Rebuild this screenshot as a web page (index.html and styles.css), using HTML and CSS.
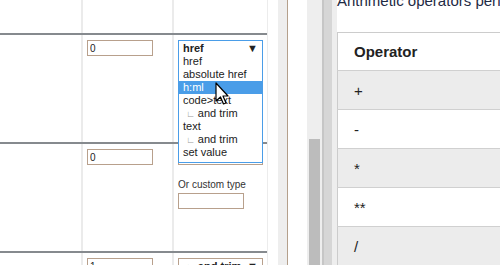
FILE: index.html
```html
<!DOCTYPE html>
<html lang="en">
<head>
    <meta charset="UTF-8">
    <title>Scraper fields</title>
    <link rel="stylesheet" href="styles.css">
</head>
<body>
    <div class="layout">
        <div class="fields">
            <div class="row row-top">
                <div class="cell c-name"></div>
                <div class="cell c-index"></div>
                <div class="cell c-type"></div>
            </div>
            <div class="row">
                <div class="cell c-name"></div>
                <div class="cell c-index">
                    <input class="num" type="text" value="0">
                </div>
                <div class="cell c-type">
                    <div class="select open">
                        <span>href</span><span class="arrow">&#9660;</span>
                    </div>
                    <ul class="options">
                        <li>href</li>
                        <li>absolute href</li>
                        <li class="active">h:ml</li>
                        <li>code&gt;text</li>
                        <li><span class="sub">&#8735;</span> and trim</li>
                        <li>text</li>
                        <li><span class="sub">&#8735;</span> and trim</li>
                        <li>set value</li>
                    </ul>
                    <svg class="cursor" width="14" height="24" viewBox="0 0 14 24">
                        <path d="M1 1 L1 19 L5.5 15 L8.5 22 L11 21 L8 14 L13 14 Z" fill="#fff" stroke="#000" stroke-width="1.2" stroke-linejoin="round"/>
                    </svg>
                </div>
            </div>
            <div class="row">
                <div class="cell c-name"></div>
                <div class="cell c-index">
                    <input class="num" type="text" value="0">
                </div>
                <div class="cell c-type">
                    <!-- covered by the open list above -->
                    <div class="select covered">
                        <span>href</span><span class="arrow">&#9660;</span>
                    </div>
                    <label class="custom-label">Or custom type</label>
                    <input class="custom" type="text">
                </div>
            </div>
            <div class="row">
                <div class="cell c-name"></div>
                <div class="cell c-index">
                    <input class="num" type="text" value="1">
                </div>
                <div class="cell c-type">
                    <div class="select">
                        <span><span class="sub">&#8735;</span> and trim</span><span class="arrow">&#9660;</span>
                    </div>
                </div>
            </div>
        </div>

        <div class="gap"></div>
        <div class="edge"></div>
        <div class="gap wide"></div>
        <div class="scrollbar"><div class="thumb"></div></div>
        <div class="splitter"></div>

        <div class="docs">
            <p class="intro">Arithmetic operators perform arithmetic on numbers (either literals or variables).</p>
            <table class="ops">
                <tr><th>Operator</th></tr>
                <tr><td>+</td></tr>
                <tr><td>-</td></tr>
                <tr><td>*</td></tr>
                <tr><td>**</td></tr>
                <tr><td>/</td></tr>
            </table>
        </div>
    </div>
</body>
</html>
```

FILE: styles.css
```css
* {
    margin: 0;
    padding: 0;
    box-sizing: border-box;
}

body {
    width: 500px;
    height: 265px;
    overflow: hidden;
    background-color: #ffffff;
    font-family: 'Liberation Sans', Arial, sans-serif;
}

.layout {
    display: flex;
    height: 265px;
}

/* left panel: field table */
.fields {
    width: 268px;
    flex-shrink: 0;
    border-right: 1px solid #ececec;
    overflow: hidden;
}

.row {
    display: flex;
    height: 109px;
    border-bottom: 2px solid #868a8e;
}

.row-top {
    height: 35px;
}

.cell {
    padding: 5px 4px;
    position: relative;
}

.c-name {
    width: 83px;
    border-right: 2px solid #ebebeb;
}

.c-index {
    width: 91px;
    border-right: 2px solid #ebebeb;
}

.c-type {
    width: 93px;
}

.num,
.custom {
    display: block;
    width: 66px;
    height: 16px;
    border: 1px solid #b8a08c;
    padding: 0 2px;
    font-family: 'Liberation Sans', Arial, sans-serif;
    font-size: 10px;
    color: #222;
    outline: none;
}

.select {
    display: flex;
    justify-content: space-between;
    align-items: center;
    width: 85px;
    height: 16px;
    border: 1px solid #b8a08c;
    padding: 0 4px;
    font-size: 11px;
    font-weight: bold;
    color: #222;
}

.select.open {
    border-color: #4a9de8;
}

.select.covered span {
    visibility: hidden;
}

.arrow {
    font-size: 11px;
    color: #222;
}

.sub {
    color: #999;
    font-weight: normal;
    font-size: 9px;
    padding-left: 3px;
}

.options {
    position: absolute;
    top: 20px;
    left: 4px;
    width: 85px;
    list-style: none;
    border: 1px solid #4a9de8;
    border-top: none;
    background-color: #ffffff;
    font-size: 11px;
    color: #222;
    padding-bottom: 3px;
    z-index: 2;
}

.options li {
    height: 13px;
    line-height: 13px;
    padding-left: 4px;
    white-space: nowrap;
}

.options li.active {
    background-color: #4a9de8;
    color: #ffffff;
}

.cursor {
    position: absolute;
    top: 47px;
    left: 41px;
    z-index: 3;
}

.custom-label {
    display: block;
    margin-top: 13px;
    font-size: 10px;
    line-height: 14px;
    color: #333;
}

.custom {
    margin-top: 1px;
}

/* middle strips */
.gap {
    width: 10px;
    flex-shrink: 0;
}

.edge {
    width: 10px;
    flex-shrink: 0;
    background-color: #eeeeee;
    border-right: 1px solid #b4a08c;
}

.gap.wide {
    width: 19px;
}

.scrollbar {
    width: 15px;
    flex-shrink: 0;
    background-color: #eeeeee;
    padding: 139px 2px 0;
}

.thumb {
    height: 100%;
    background-color: #bcbcbc;
}

.splitter {
    width: 10px;
    flex-shrink: 0;
    background-color: #d6d6d6;
    border-left: 2px solid #c6c6c6;
}

/* right panel: docs */
.docs {
    flex: 1;
    min-width: 0;
    background-color: #eeeeee;
    padding-left: 5px;
    overflow: hidden;
}

.intro {
    background-color: #ffffff;
    margin-top: -7px;
    height: 39px;
    font-size: 15px;
    line-height: 15px;
    color: #1e2a44;
    white-space: nowrap;
}

.ops {
    width: 300px;
    border-collapse: collapse;
    border-top: 1px solid #cccccc;
    border-left: 1px solid #cccccc;
    font-size: 15px;
    color: #222;
}

.ops th,
.ops td {
    height: 39px;
    padding: 0 16px;
    text-align: left;
    border-bottom: 1px solid #d0d0d0;
    background-color: #ffffff;
}

.ops th {
    height: 38px;
    font-weight: bold;
}

.ops tr:nth-child(even) td {
    background-color: #ececec;
}
```
